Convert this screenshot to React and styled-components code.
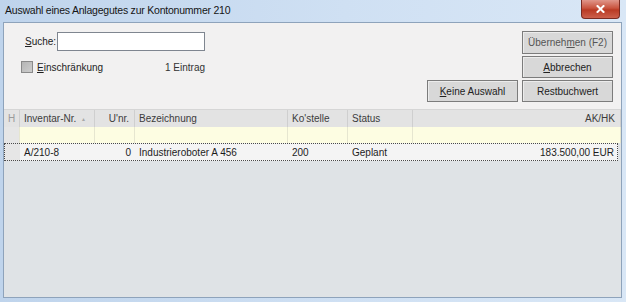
import React from "react";
import styled, { createGlobalStyle } from "styled-components";

const GlobalStyle = createGlobalStyle`
  html, body {
    margin: 0;
    padding: 0;
    background: #c6daef;
  }
  body {
    font-family: "Liberation Sans", Arial, sans-serif;
    font-size: 10px;
    color: #1e1e1e;
    white-space: nowrap;
  }
`;

const Frame = styled.div`
  width: 626px;
  height: 302px;
  box-sizing: border-box;
  display: flex;
  flex-direction: column;
  background: linear-gradient(90deg, #bfd4ec 0%, #cfe0f3 55%, #d9e7f6 100%);
  padding: 0 4px 4px 3px;
`;

const TitleBar = styled.div`
  height: 22px;
  display: flex;
  align-items: center;
  justify-content: space-between;
  padding-left: 2px;
  flex-shrink: 0;
`;

const Title = styled.span`
  font-size: 10.5px;
  color: #151515;
  letter-spacing: -0.22px;
  margin-top: -3px;
`;

const CloseButton = styled.div`
  width: 39px;
  height: 19px;
  margin-top: -3px;
  margin-right: 2px;
  border: 1px solid #7a2b22;
  border-top: none;
  border-radius: 0 0 4px 4px;
  background: linear-gradient(180deg, #e0968a 0%, #c9543f 45%, #b93a24 55%, #cc604c 100%);
  display: flex;
  align-items: center;
  justify-content: center;
  box-sizing: border-box;
`;

const Client = styled.div`
  flex: 1;
  display: flex;
  flex-direction: column;
  border: 1px solid #8ea3bb;
  background: #f2f1f1;
`;

const TopPanel = styled.div`
  display: flex;
  justify-content: space-between;
  padding: 8px 8px 6px 17px;
  height: 86px;
  box-sizing: border-box;
`;

const LeftControls = styled.div`
  display: flex;
  flex-direction: column;
  gap: 10px;
  padding-top: 1px;
`;

const Row = styled.div`
  display: flex;
  align-items: center;
`;

const Label = styled.label`
  margin-left: 4px;
  margin-right: 1px;
  color: #222;
`;

const SearchInput = styled.div`
  width: 146px;
  height: 17px;
  background: #fff;
  border: 1px solid #7f8690;
`;

const CheckBox = styled.div`
  width: 10px;
  height: 10px;
  border: 1px solid #8a8a8a;
  background: linear-gradient(135deg, #b5b5b5, #cdcdcd);
`;

const CheckLabel = styled.span`
  margin-left: 4px;
  width: 128px;
`;

const Count = styled.span`
  color: #333;
`;

const ButtonGrid = styled.div`
  display: grid;
  grid-template-columns: 91px 91px;
  grid-template-rows: 23px 22px 22px;
  column-gap: 4px;
  row-gap: 2px;
`;

const Button = styled.div`
  grid-column: ${(p) => p.col};
  grid-row: ${(p) => p.row};
  background: #d8d8d8;
  border: 1px solid #7c7c7c;
  box-shadow: inset 1px 1px 0 #ececec;
  display: flex;
  align-items: center;
  justify-content: center;
  color: ${(p) => (p.muted ? "#555" : "#222")};
  box-sizing: border-box;
`;

const U = styled.span`
  text-decoration: underline;
`;

const Grid = styled.div`
  flex: 1;
  display: flex;
  flex-direction: column;
  background: #dfe3e6;
  border-top: 1px solid #d6d6d6;
`;

const GridRow = styled.div`
  display: grid;
  grid-template-columns: 16px 75px 40px 153px 60px 65px 1fr;
  height: ${(p) => p.h}px;
  background: ${(p) => p.bg};
  align-items: stretch;
  box-sizing: border-box;
  margin-right: ${(p) => (p.selected ? "3px" : "0")};
  outline: ${(p) => (p.selected ? "1px dotted #4a4a4a" : "none")};
  outline-offset: -1px;
`;

const HeadCell = styled.div`
  display: flex;
  align-items: center;
  justify-content: ${(p) => (p.right ? "flex-end" : "flex-start")};
  padding: 0 ${(p) => (p.right ? "5px" : "3px")} 0 4px;
  border-right: 1px solid #cfcfcf;
  color: ${(p) => (p.dim ? "#9a9a9a" : "#3c3c3c")};
  background: #e3e3e3;
  overflow: hidden;
`;

const Cell = styled.div`
  display: flex;
  align-items: center;
  justify-content: ${(p) => (p.right ? "flex-end" : "flex-start")};
  padding: 0 3px 0 4px;
  border-right: 1px solid ${(p) => p.line || "transparent"};
  background: ${(p) => p.bg || "transparent"};
  color: #1c1c1c;
  overflow: hidden;
`;

const SortArrow = styled.span`
  margin-left: auto;
  margin-right: 5px;
  font-size: 5px;
  color: #a8a8a8;
`;

const columns = [
  { key: "h", label: "H", dim: true },
  { key: "inv", label: "Inventar-Nr.", sort: true },
  { key: "unr", label: "U'nr.", right: true },
  { key: "bez", label: "Bezeichnung" },
  { key: "kst", label: "Ko'stelle" },
  { key: "status", label: "Status" },
  { key: "akhk", label: "AK/HK", right: true },
];

const dataRow = {
  h: "",
  inv: "A/210-8",
  unr: "0",
  bez: "Industrieroboter A 456",
  kst: "200",
  status: "Geplant",
  akhk: "183.500,00 EUR",
};

const App = () => {
  return (
    <>
      <GlobalStyle />
      <Frame>
        <TitleBar>
          <Title>Auswahl eines Anlagegutes zur Kontonummer 210</Title>
          <CloseButton>
            <svg width="9" height="8" viewBox="0 0 9 8">
              <path d="M1.5 1 L7.5 7 M7.5 1 L1.5 7" stroke="#fff" strokeWidth="2" strokeLinecap="square" />
            </svg>
          </CloseButton>
        </TitleBar>
        <Client>
          <TopPanel>
            <LeftControls>
              <Row>
                <Label>
                  <U>S</U>uche:
                </Label>
                <SearchInput />
              </Row>
              <Row>
                <CheckBox />
                <CheckLabel>
                  <U>E</U>inschränkung
                </CheckLabel>
                <Count>1 Eintrag</Count>
              </Row>
            </LeftControls>
            <ButtonGrid>
              <Button col={2} row={1} muted>
                Überneh<U>m</U>en (F2)
              </Button>
              <Button col={2} row={2}>
                <U>A</U>bbrechen
              </Button>
              <Button col={1} row={3}>
                <U>K</U>eine Auswahl
              </Button>
              <Button col={2} row={3}>
                Restbuchwert
              </Button>
            </ButtonGrid>
          </TopPanel>
          <Grid>
            <GridRow h={17} bg="#e3e3e3">
              {columns.map((c) => (
                <HeadCell key={c.key} right={c.right} dim={c.dim}>
                  {c.label}
                  {c.sort && <SortArrow>▲</SortArrow>}
                </HeadCell>
              ))}
            </GridRow>
            <GridRow h={16} bg="#fdfde2">
              {columns.map((c, i) => (
                <Cell key={c.key} line="#e6e6d0" bg={i === 0 ? "#e6e6e6" : undefined} />
              ))}
            </GridRow>
            <GridRow h={18} bg="#f4f4f4" selected>
              {columns.map((c, i) => (
                <Cell key={c.key} right={c.right} bg={i === 0 ? "#e6e6e6" : undefined}>
                  {dataRow[c.key]}
                </Cell>
              ))}
            </GridRow>
          </Grid>
        </Client>
      </Frame>
    </>
  );
};

export default App;
